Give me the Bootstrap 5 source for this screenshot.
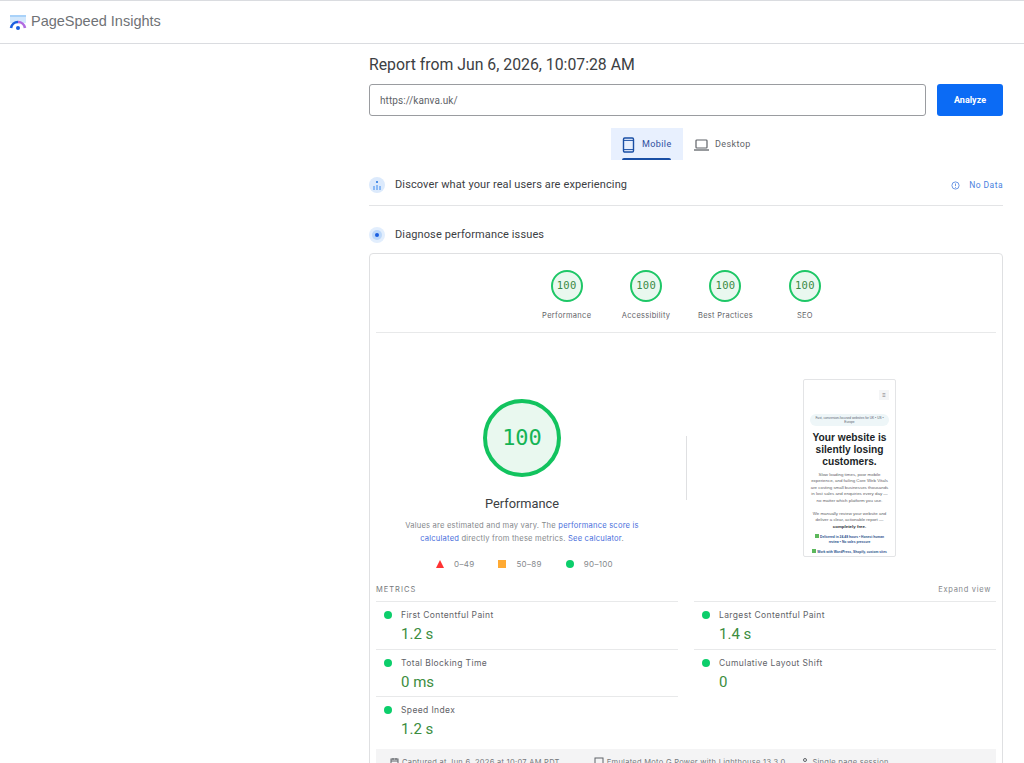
<!DOCTYPE html>
<html lang="en">
<head>
  <meta charset="UTF-8">
  <meta name="viewport" content="width=device-width, initial-scale=1.0">
  <title>PageSpeed Insights</title>
  <link href="https://cdn.jsdelivr.net/npm/bootstrap@5.3.0/dist/css/bootstrap.min.css" rel="stylesheet" />
  <style>
    html, body { height: 100%; overflow: hidden; }
    body { font-family: Roboto, "Liberation Sans", sans-serif; color: #202124; background: #fff; }
    .psi-top { height: 44px; border-top: 1px solid #dadce0; border-bottom: 1px solid #dadce0; padding-left: 9px; gap: 4px; }
    .psi-brand { font-family: "Liberation Sans", sans-serif; font-size: 14.5px; color: #6f7276; }
    .psi-main { margin-left: 369px; width: 634px; height: 719px; overflow: hidden; }
    .psi-title { font-size: 15.8px; font-weight: 400; line-height: 22px; margin: 10px 0 0; color: #3c4043; }
    .psi-form { margin-top: 8px; gap: 11px; }
    .psi-url { height: 32px; border-radius: 3px; border: 1px solid #9a9ca0; font-size: 10px; letter-spacing: .1px; padding: 0 10px; color: #5f6368; }
    .psi-go { width: 66px; height: 32px; flex: none; padding: 2px 0 0; font-size: 9px; font-weight: 700; border-radius: 3px; background: #0b6bf5; border: 0; }
    .psi-tabs { margin-top: 12px; height: 32px; padding-left: 242px; }
    .psi-tab { width: 72px; height: 32px; padding: 2px 0 0 11px; font-size: 9px; letter-spacing: .4px; color: #5f6368; gap: 6px; position: relative; }
    .psi-tab.on { background: #e8f0fe; color: #2f4f9e; }
    .psi-tab.on::after { content: ""; position: absolute; left: 11px; right: 12px; bottom: 0; height: 2px; background: #1a4fa5; border-radius: 2px 2px 0 0; }
    .psi-sect { font-size: 11px; letter-spacing: .12px; color: #3c4043; gap: 10px; }
    .psi-sect-a { margin-top: 14px; height: 32px; border-bottom: 1px solid #e3e4e6; padding-bottom: 9px; }
    .psi-sect-b { margin-top: 18px; height: 22px; }
    .psi-nodata { font-size: 8.5px; color: #4a7fe0; gap: 9px; letter-spacing: .45px; }
    .psi-report { margin-top: 7px; height: 560px; border: 1px solid #dfe0e2; border-radius: 4px; padding: 0 6px; }
    .psi-gauges { height: 79px; padding-top: 16px; padding-left: 151px; border-bottom: 1px solid #e8e9ea; }
    .psi-g { width: 79.4px; font-family: Inter, sans-serif; font-size: 7.5px; letter-spacing: .3px; color: #5f6368; }
    .psi-ring { width: 32px; height: 32px; border-radius: 50%; border: 2px solid #1ec767; background: #e9f8ef; color: #3a8a45; font-family: "DejaVu Sans Mono", monospace; font-size: 10.5px; margin-bottom: 8px; }
    .psi-hero { height: 245px; }
    .psi-hero-l { width: 292px; padding-top: 66px; }
    .psi-bigring { width: 78px; height: 78px; flex: none; border-radius: 50%; border: 4px solid #12c35e; background: #e9f8ef; color: #15b455; font-family: "DejaVu Sans Mono", monospace; font-size: 22px; padding-bottom: 2px; }
    .psi-bigname { font-size: 12.8px; margin-top: 17px; line-height: 20px; color: #3c4043; }
    .psi-note { font-family: Inter, sans-serif; font-size: 7.6px; letter-spacing: .2px; line-height: 13px; color: #85888c; width: 250px; text-align: center; margin-top: 5px; }
    .psi-note a { color: #4a6fdc; text-decoration: none; }
    .psi-legend { font-family: Inter, sans-serif; font-size: 8px; letter-spacing: .3px; color: #85888c; gap: 24px; margin: 13px 0 0 5px; }
    .psi-legend > div { gap: 10px; }
    .psi-vline { width: 1px; height: 64px; background: #dfe0e2; margin: 103px 0 0 18px; }
    .psi-shot { width: 93px; height: 178px; margin: 46px 0 0 116px; border: 1px solid #e3e4e6; border-radius: 2px; overflow: hidden; font-family: "Liberation Sans", sans-serif; text-align: center; padding: 0 6px; color: #5f6368; font-size: 4.4px; line-height: 6.6px; }
    .psi-burger { width: 10px; height: 10px; margin: 10px 0 14px auto; background: #f4f5f6; color: #777; font-size: 6px; line-height: 10px; }
    .psi-pill { background: #eef6f8; border-radius: 6px; font-size: 3.2px; line-height: 4.6px; padding: 1.6px 4px; color: #5a6470; margin-bottom: 5.3px; }
    .psi-shot-h { font-size: 10.2px; line-height: 12px; font-weight: 700; color: #1b1f27; margin-bottom: 4px; }
    .psi-shot p { margin: 0 0 6px; }
    .psi-shot p:last-of-type { margin-bottom: 4px; }
    .psi-shot b { color: #2b2f36; }
    .psi-chk { color: #264f8c; font-weight: 700; font-size: 3.3px; line-height: 5px; margin-bottom: 4px; }
    .psi-chk i { display: inline-block; width: 4px; height: 4px; background: #5cb85c; margin-right: 1px; vertical-align: -.5px; }
    .psi-mhead { font-family: Inter, sans-serif; font-size: 7.5px; letter-spacing: 1px; color: #75787c; height: 23px; padding-right: 5px; }
    .psi-mhead span:last-child { letter-spacing: .7px; color: #85888c; }
    .psi-cols { gap: 16px; }
    .psi-col { flex: 1 1 0; }
    .psi-m { height: 47.5px; border-top: 1px solid #e8e9ea; padding: 6px 0 0 8px; gap: 9px; }
    .psi-dot { width: 8px; height: 8px; border-radius: 50%; background: #0cce6b; flex: none; margin-top: 3px; }
    .psi-mlabel { font-family: Inter, sans-serif; font-size: 8.5px; letter-spacing: .38px; line-height: 14px; color: #5f6368; }
    .psi-mval { font-size: 15px; line-height: 21px; color: #3c8d40; margin-top: 2px; }
    .psi-foot { margin-top: 5px; height: 40px; background: #f4f4f5; padding: 8px 14px 0; font-family: Inter, sans-serif; font-size: 7.5px; letter-spacing: .28px; color: #75787c; }
    .psi-foot > div { gap: 3px; }
    .psi-foot > div:first-child { margin-right: 34px; }
    .psi-foot > div:nth-child(2) { margin-right: 16px; }
  </style>
</head>
<body>
  <header class="psi-top d-flex align-items-center">
    <svg width="18" height="17" viewBox="0 0 18 17">
      <rect x="1" y="1" width="16" height="8" fill="#d3e8fc"/>
      <rect x="1" y="1" width="16" height="2" fill="#a9d2f9"/>
      <path d="M2 14a7.2 7.2 0 0 1 7-6" fill="none" stroke="#1a5fe0" stroke-width="2.6"/>
      <path d="M9 8a7.2 7.2 0 0 1 7 6" fill="none" stroke="#b06be0" stroke-width="2.6"/>
      <circle cx="9" cy="14" r="2" fill="#1a5fe0"/>
    </svg>
    <span class="psi-brand">PageSpeed Insights</span>
  </header>

  <main class="psi-main">
    <h1 class="psi-title">Report from Jun 6, 2026, 10:07:28 AM</h1>

    <div class="psi-form d-flex">
      <input class="form-control psi-url" type="text" value="https://kanva.uk/">
      <button class="btn btn-primary psi-go" type="button">Analyze</button>
    </div>

    <div class="psi-tabs d-flex">
      <div class="psi-tab on d-flex align-items-center">
        <svg width="14" height="16" viewBox="0 0 14 16"><rect x="1.5" y="1" width="10" height="14" rx="1.2" fill="none" stroke="#1a4fa5" stroke-width="1.4"/><path d="M1.5 3.4h10M1.5 12.6h10" stroke="#1a4fa5" stroke-width="1"/></svg>
        <span>Mobile</span>
      </div>
      <div class="psi-tab d-flex align-items-center">
        <svg width="15" height="12" viewBox="0 0 15 12"><rect x="2" y="1" width="11" height="8" rx=".8" fill="none" stroke="#5f6368" stroke-width="1.2"/><path d="M0 11h15" stroke="#5f6368" stroke-width="1.3"/></svg>
        <span>Desktop</span>
      </div>
    </div>

    <div class="psi-sect psi-sect-a d-flex align-items-center">
      <svg width="16" height="16" viewBox="0 0 16 16"><circle cx="8" cy="8" r="8" fill="#dceafc"/><circle cx="8" cy="5" r="1" fill="#1a6fe0"/><path d="M5 9v4M8 8v5M11 9v4" stroke="#6fa9f2" stroke-width="1.5"/></svg>
      <span class="flex-grow-1">Discover what your real users are experiencing</span>
      <div class="psi-nodata d-flex align-items-center">
        <svg width="9" height="9" viewBox="0 0 9 9"><circle cx="4.5" cy="4.5" r="3.6" fill="none" stroke="#4a7fe0" stroke-width=".8"/><path d="M4.5 2.5v2.6M4.5 6v.8" stroke="#4a7fe0" stroke-width=".8"/></svg>
        <span>No Data</span>
      </div>
    </div>

    <div class="psi-sect psi-sect-b d-flex align-items-center">
      <svg width="16" height="16" viewBox="0 0 16 16"><circle cx="8" cy="8" r="8" fill="#e2eefd"/><circle cx="8" cy="8" r="5" fill="#bcd8fa"/><circle cx="8" cy="8" r="2" fill="#1a5fe0"/></svg>
      <span>Diagnose performance issues</span>
    </div>

    <section class="psi-report">
      <div class="psi-gauges d-flex">
        <div class="psi-g d-flex flex-column align-items-center"><div class="psi-ring d-flex align-items-center justify-content-center">100</div>Performance</div>
        <div class="psi-g d-flex flex-column align-items-center"><div class="psi-ring d-flex align-items-center justify-content-center">100</div>Accessibility</div>
        <div class="psi-g d-flex flex-column align-items-center"><div class="psi-ring d-flex align-items-center justify-content-center">100</div>Best Practices</div>
        <div class="psi-g d-flex flex-column align-items-center"><div class="psi-ring d-flex align-items-center justify-content-center">100</div>SEO</div>
      </div>

      <div class="psi-hero d-flex">
        <div class="psi-hero-l d-flex flex-column align-items-center">
          <div class="psi-bigring d-flex align-items-center justify-content-center">100</div>
          <div class="psi-bigname">Performance</div>
          <div class="psi-note">Values are estimated and may vary. The <a href="#">performance score is calculated</a> directly from these metrics. <a href="#">See calculator</a>.</div>
          <div class="psi-legend d-flex">
            <div class="d-flex align-items-center"><svg width="8" height="8" viewBox="0 0 8 8"><path d="M4 0l4 8H0z" fill="#f33"/></svg>0–49</div>
            <div class="d-flex align-items-center"><svg width="8" height="8" viewBox="0 0 8 8"><rect width="8" height="8" fill="#fa3"/></svg>50–89</div>
            <div class="d-flex align-items-center"><svg width="8" height="8" viewBox="0 0 8 8"><circle cx="4" cy="4" r="4" fill="#0cce6b"/></svg>90–100</div>
          </div>
        </div>
        <div class="psi-vline"></div>
        <div class="psi-shot">
          <div class="psi-burger">≡</div>
          <div class="psi-pill">Fast, conversion-focused websites for UK • US • Europe</div>
          <div class="psi-shot-h">Your website is silently losing customers.</div>
          <p>Slow loading times, poor mobile experience, and failing Core Web Vitals are costing small businesses thousands in lost sales and enquiries every day — no matter which platform you use.</p>
          <p>We manually review your website and deliver a clear, actionable report — <b>completely free.</b></p>
          <div class="psi-chk"><i></i>Delivered in 24-48 hours • Honest human review • No sales pressure</div>
          <div class="psi-chk"><i></i>Work with WordPress, Shopify, custom sites</div>
        </div>
      </div>

      <div class="psi-mhead d-flex justify-content-between align-items-center">
        <span>METRICS</span><span>Expand view</span>
      </div>
      <div class="psi-cols d-flex">
        <div class="psi-col">
          <div class="psi-m d-flex"><span class="psi-dot"></span><div><div class="psi-mlabel">First Contentful Paint</div><div class="psi-mval">1.2 s</div></div></div>
          <div class="psi-m d-flex"><span class="psi-dot"></span><div><div class="psi-mlabel">Total Blocking Time</div><div class="psi-mval">0 ms</div></div></div>
          <div class="psi-m d-flex"><span class="psi-dot"></span><div><div class="psi-mlabel">Speed Index</div><div class="psi-mval">1.2 s</div></div></div>
        </div>
        <div class="psi-col">
          <div class="psi-m d-flex"><span class="psi-dot"></span><div><div class="psi-mlabel">Largest Contentful Paint</div><div class="psi-mval">1.4 s</div></div></div>
          <div class="psi-m d-flex"><span class="psi-dot"></span><div><div class="psi-mlabel">Cumulative Layout Shift</div><div class="psi-mval">0</div></div></div>
        </div>
      </div>
      <div class="psi-foot d-flex">
        <div class="d-flex align-items-start"><svg width="9" height="10" viewBox="0 0 9 10"><rect x="1" y="2" width="7" height="7" fill="none" stroke="#5f6368"/><path d="M1 4h7M3 1v2M6 1v2" stroke="#5f6368"/></svg>Captured at Jun 6, 2026 at 10:07 AM PDT</div>
        <div class="d-flex align-items-start"><svg width="10" height="10" viewBox="0 0 10 10"><rect x="1" y="1" width="8" height="6" fill="none" stroke="#5f6368"/></svg>Emulated Moto G Power with Lighthouse 13.3.0</div>
        <div class="d-flex align-items-start"><svg width="8" height="10" viewBox="0 0 8 10"><circle cx="4" cy="3" r="1.5" fill="none" stroke="#5f6368"/><path d="M1 9c0-3 6-3 6 0" fill="none" stroke="#5f6368"/></svg>Single page session</div>
      </div>
    </section>
  </main>
</body>
</html>
